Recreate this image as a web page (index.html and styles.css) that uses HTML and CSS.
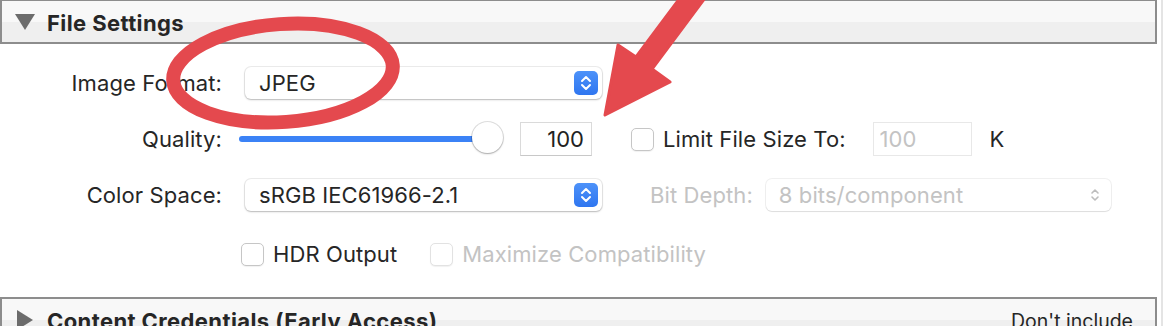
FILE: index.html
```html
<!DOCTYPE html>
<html lang="en">
<head>
  <meta charset="UTF-8">
  <meta name="viewport" content="width=device-width, initial-scale=1.0">
  <title>Export - File Settings</title>
  <link rel="stylesheet" href="styles.css">
</head>
<body>
  <div class="window">
    <div class="content">

      <!-- File Settings -->
      <div class="section-header first">
        <svg class="disclosure" width="20" height="16" viewBox="0 0 20 16"><polygon points="0,0 20,0 10,16" /></svg>
        <span class="section-title">File Settings</span>
      </div>

      <div class="section-body">
        <div class="row">
          <span class="label">Image Format:</span>
          <div class="popup">
            <span class="popup-value">JPEG</span>
            <span class="stepper">
              <svg width="12" height="18" viewBox="0 0 12 18"><polyline points="2,7 6,3 10,7" /><polyline points="2,11 6,15 10,11" /></svg>
            </span>
          </div>
        </div>

        <div class="row">
          <span class="label">Quality:</span>
          <div class="slider">
            <div class="track"></div>
            <div class="knob"></div>
          </div>
          <input class="field quality" type="text" value="100">
          <span class="checkbox limit-check"></span>
          <span class="check-label">Limit File Size To:</span>
          <input class="field size" type="text" value="100" disabled>
          <span class="unit">K</span>
        </div>

        <div class="row">
          <span class="label">Color Space:</span>
          <div class="popup">
            <span class="popup-value">sRGB IEC61966-2.1</span>
            <span class="stepper">
              <svg width="12" height="18" viewBox="0 0 12 18"><polyline points="2,7 6,3 10,7" /><polyline points="2,11 6,15 10,11" /></svg>
            </span>
          </div>
          <span class="label-inline disabled">Bit Depth:</span>
          <div class="popup popup-disabled">
            <span class="popup-value">8 bits/component</span>
            <span class="stepper-plain">
              <svg width="12" height="18" viewBox="0 0 12 18"><polyline points="3,7 6,4 9,7" /><polyline points="3,11 6,14 9,11" /></svg>
            </span>
          </div>
        </div>

        <div class="row">
          <span class="label"></span>
          <span class="checkbox hdr-check"></span>
          <span class="check-label">HDR Output</span>
          <span class="checkbox checkbox-disabled compat-check"></span>
          <span class="check-label disabled">Maximize Compatibility</span>
        </div>
      </div>

      <div class="divider"></div>

      <!-- Content Credentials -->
      <div class="section-header">
        <svg class="disclosure closed" width="16" height="20" viewBox="0 0 16 20"><polygon points="0,0 16,10 0,20" /></svg>
        <span class="section-title">Content Credentials (Early Access)</span>
        <span class="section-summary">Don't include</span>
      </div>

    </div>
    <div class="scroll-edge"></div>
  </div>

  <!-- red annotation marks drawn over the panel -->
  <svg class="annotation" width="1166" height="326" viewBox="0 0 1166 326">
    <ellipse cx="283" cy="73" rx="110" ry="49" transform="rotate(-4 283 73)" />
    <polygon points="680,-2 705,-2 652,69 670,82 605,115 618,45 636,57" />
  </svg>
</body>
</html>
```

FILE: styles.css
```css
html, body {
  margin: 0;
  padding: 0;
  overflow: hidden;
  background: #fff;
}

body {
  font-family: 'Inter', 'Liberation Sans', sans-serif;
  font-size: 22px;
  letter-spacing: 0.1px;
  color: #262626;
}

.window {
  display: flex;
  height: 326px;
}

.content {
  width: 1161px;
}

.scroll-edge {
  width: 2px;
  background: #e4e4e4;
}

/* section headers */
.section-header {
  display: flex;
  align-items: center;
  width: 1153px;
  height: 41px;
  border: 2px solid #8d8d8d;
  background: linear-gradient(#f8f8f8 50%, #efefef 50%);
  margin-top: 4px;
}

.section-header.first {
  border-top-width: 1px;
  margin-top: 0;
}

.disclosure {
  fill: #6c6c6c;
  margin-left: 13px;
  margin-right: 12px;
}

.disclosure.closed {
  margin-left: 15px;
  margin-right: 14px;
}

.section-title {
  font-weight: 700;
  letter-spacing: 0.4px;
  margin-top: 2px;
}

.section-summary {
  margin-left: auto;
  margin-right: 22px;
  font-size: 19.5px;
  letter-spacing: 0;
  margin-top: 2px;
}

/* body */
.section-body {
  padding: 22px 0 22px 0;
  display: flex;
  flex-direction: column;
  gap: 22px;
}

.row {
  display: flex;
  align-items: center;
  height: 34px;
}

.row:last-child {
  margin-top: 3px;
}

.label {
  width: 222px;
  margin-right: 23px;
  text-align: right;
}

.disabled {
  color: #c3c3c3;
}

/* popup buttons */
.popup {
  display: flex;
  align-items: center;
  justify-content: space-between;
  width: 357px;
  height: 32px;
  box-sizing: border-box;
  padding: 0 4px 0 14px;
  border-radius: 6px;
  background: #fff;
  box-shadow: 0 0 0 1px rgba(0, 0, 0, 0.07), 0 1px 2px rgba(0, 0, 0, 0.22);
}

.stepper {
  display: flex;
  align-items: center;
  justify-content: center;
  width: 24px;
  height: 24px;
  border-radius: 5px;
  background: linear-gradient(#4d92f9, #2f76f0);
}

.stepper svg,
.stepper-plain svg {
  fill: none;
  stroke: #fff;
  stroke-width: 2;
  stroke-linecap: round;
  stroke-linejoin: round;
}

.stepper-plain {
  display: flex;
  width: 24px;
  justify-content: center;
}

.stepper-plain svg {
  stroke: #bdbdbd;
  stroke-width: 1.6;
}

.popup-disabled {
  width: 345px;
  color: #c3c3c3;
  box-shadow: 0 0 0 1px rgba(0, 0, 0, 0.06), 0 1px 1px rgba(0, 0, 0, 0.08);
  padding-left: 13px;
}

.label-inline {
  margin-left: 48px;
  margin-right: 13px;
}

/* slider */
.slider {
  position: relative;
  display: flex;
  align-items: center;
  width: 265px;
  height: 34px;
  margin-left: -6px;
}

.track {
  width: 250px;
  height: 6px;
  border-radius: 3px;
  background: #3b82f6;
}

.knob {
  position: absolute;
  left: 233px;
  top: 0;
  width: 31px;
  height: 31px;
  border-radius: 50%;
  background: #fff;
  box-shadow: 0 0 0 1px rgba(0, 0, 0, 0.12), 0 1px 2px rgba(0, 0, 0, 0.25);
}

/* text fields */
.field {
  box-sizing: border-box;
  height: 34px;
  border: 1px solid #dadada;
  border-bottom-color: #c8c8c8;
  font-family: inherit;
  font-size: 22px;
  color: #222;
  background: #fff;
  outline: none;
}

.field.quality {
  width: 72px;
  margin-left: 16px;
  text-align: right;
  padding: 0 7px 0 0;
}

.field.size {
  width: 99px;
  margin-left: 27px;
  padding: 0 0 0 6px;
  color: #c3c3c3;
  border-color: #e8e8e8;
}

.unit {
  margin-left: 18px;
}

/* checkboxes */
.checkbox {
  box-sizing: border-box;
  width: 23px;
  height: 23px;
  border-radius: 5px;
  border: 1px solid #c6c6c6;
  background: #fff;
  box-shadow: 0 1px 1px rgba(0, 0, 0, 0.06);
}

.checkbox-disabled {
  border-color: #e2e2e2;
}

.limit-check {
  margin-left: 39px;
}

.hdr-check {
  margin-left: -4px;
}

.compat-check {
  margin-left: 33px;
}

.check-label {
  margin-left: 9px;
}

/* annotation */
.annotation {
  position: absolute;
  left: 0;
  top: 0;
  pointer-events: none;
}

.annotation ellipse {
  fill: none;
  stroke: #e4494e;
  stroke-width: 14;
}

.annotation polygon {
  fill: #e4494e;
  stroke: #e4494e;
  stroke-width: 3;
  stroke-linejoin: round;
}
```
